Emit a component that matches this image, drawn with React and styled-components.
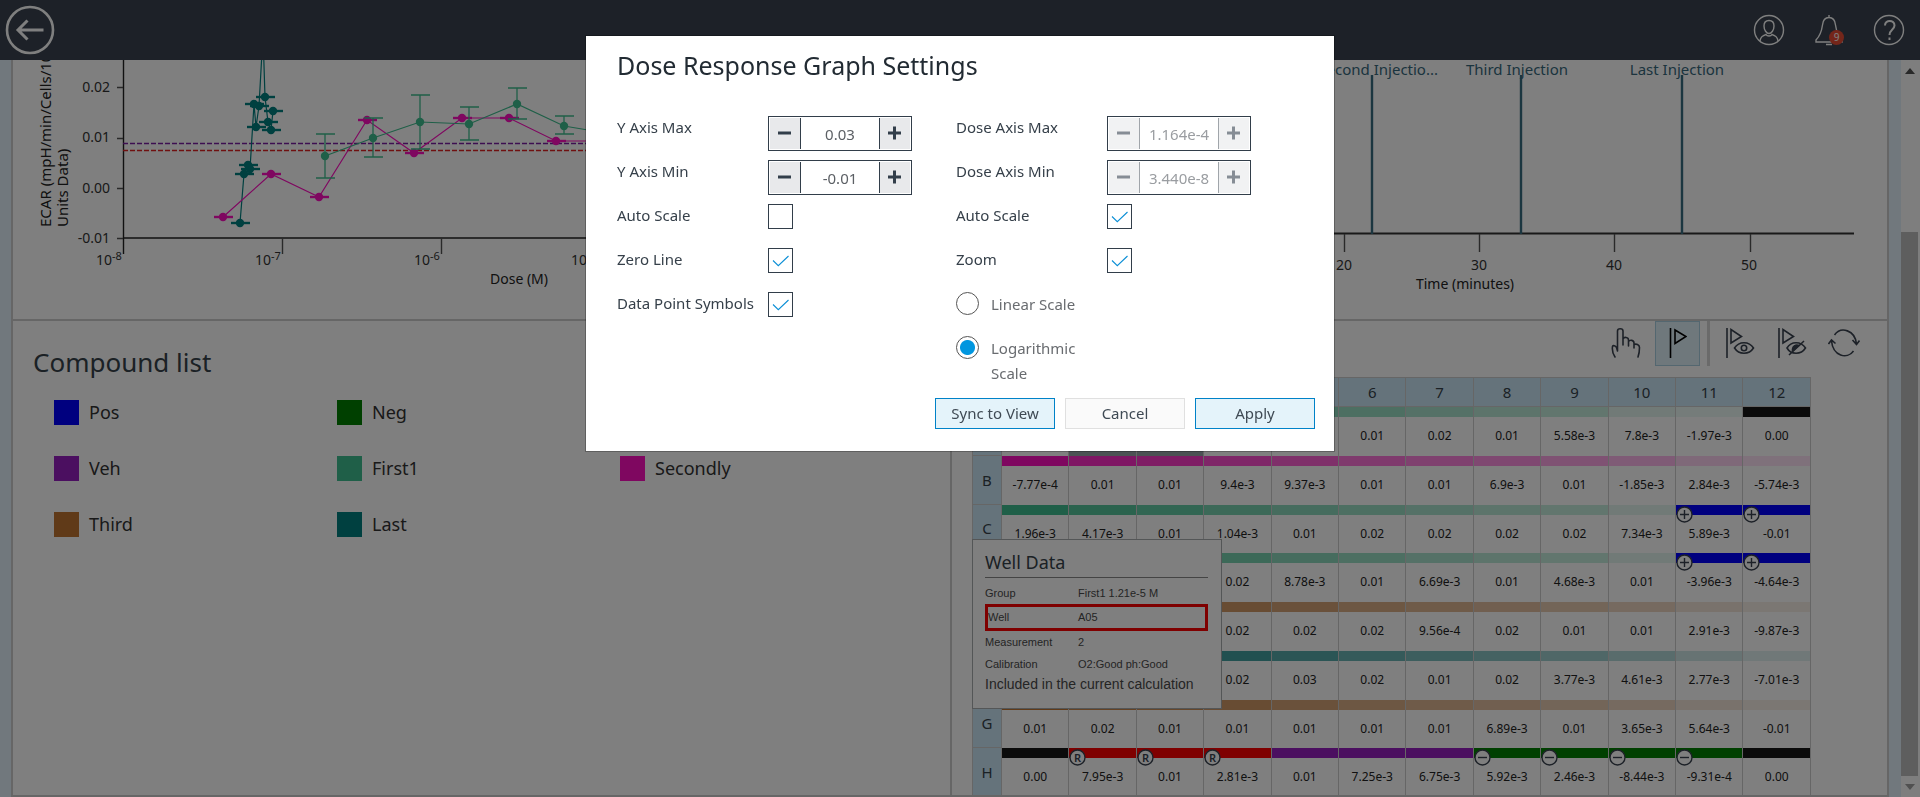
import React from "react";
import styled, { createGlobalStyle } from "styled-components";

const GlobalStyle = createGlobalStyle`
  *, *::before, *::after { box-sizing: border-box; }
  html, body { margin: 0; height: 100%; }
  body { font-family: "Noto Sans", "Open Sans", sans-serif; color: #36424a; background: #e2f0fa; overflow: hidden; }
  button, input { font: inherit; color: inherit; }
`;

const line = "#cdcdcd";

const Shell = styled.div`
  display: flex;
  flex-direction: column;
  height: 100vh;
  min-height: 600px;
`;

const Header = styled.header`
  flex: 0 0 60px;
  display: flex;
  align-items: center;
  justify-content: space-between;
  padding: 0 15px 0 5px;
  background: #3a4350;
  color: #fff;
`;

const HeaderActions = styled.nav`
  display: flex;
  gap: 28px;
`;

const IconButton = styled.button`
  display: block;
  padding: 0;
  border: 0;
  background: none;
  line-height: 0;
`;

const Body = styled.div`
  flex: 1;
  min-height: 0;
  display: flex;
  padding-left: 11px;
`;

const Main = styled.main`
  flex: 1;
  min-width: 0;
  display: flex;
  flex-direction: column;
  margin-right: 12px;
  border: solid ${line};
  border-width: 0 2px 2px;
  background: #fff;
`;

const Charts = styled.section`
  flex: 0 0 261px;
  display: grid;
  grid-template-columns: minmax(0, 1fr) minmax(0, 1fr);
  border-bottom: 2px solid ${line};
  overflow: hidden;
`;

const ChartPanel = styled.div`
  overflow: hidden;
  & + & { border-left: 2px solid ${line}; }
  svg { display: block; font-size: 14px; }
`;

const Lower = styled.section`
  flex: 1;
  min-height: 0;
  display: grid;
  grid-template-columns: minmax(0, 1fr) minmax(0, 1fr);
  grid-template-rows: minmax(0, 1fr);
`;

const Compounds = styled.section`
  padding: 22px 47px 0 20px;
`;

const PanelTitle = styled.h2`
  margin: 0 0 19px;
  font-size: 26px;
  line-height: 38px;
  font-weight: 400;
`;

const Legend = styled.ul`
  display: grid;
  grid-template-columns: repeat(3, 1fr);
  row-gap: 31px;
  margin: 0;
  padding: 0 0 0 21px;
  list-style: none;
`;

const LegendItem = styled.li`
  display: flex;
  gap: 10px;
  font-size: 18px;
  line-height: 25px;
  color: #333;
  &::before {
    content: "";
    width: 25px;
    height: 25px;
    background: ${(p) => p.$color};
  }
`;

const PlatePanel = styled.section`
  position: relative;
  border-left: 2px solid ${line};
  overflow: hidden;
`;

const Toolbar = styled.div`
  display: flex;
  justify-content: flex-end;
  gap: 7px;
  padding-right: 21px;
  margin-bottom: 11px;
`;

const Tool = styled.button`
  display: grid;
  place-items: center;
  width: 45px;
  height: 45px;
  padding: 0 0 2px;
  border: 1px solid ${(p) => (p.$active ? "#a9cfe0" : "transparent")};
  background: ${(p) => (p.$active ? "#dff1f8" : "none")};
  color: ${(p) => (p.$active ? "#000" : "#3a4350")};
`;

const ToolDivider = styled.span`
  width: 3px;
  background: #d5d5d5;
`;

const PlateFrame = styled.div`
  padding: 0 76px 0 20px;
`;

const Plate = styled.table`
  width: 100%;
  height: 420px;
  table-layout: fixed;
  border-collapse: separate;
  border-spacing: 0;
  border: solid ${line};
  border-width: 1px 0 0 1px;
`;

const Head = styled.th`
  width: ${(p) => (p.$corner ? "29px" : "auto")};
  height: 29px;
  padding: 0;
  border: solid ${line};
  border-width: 0 1px 1px 0;
  background: #cbe6f6;
  font-size: 15px;
  font-weight: 400;
  text-align: center;
`;

const Well = styled.td`
  position: relative;
  padding: 0;
  border-right: 1px solid ${line};
  background: ${(p) => (p.$shaded ? "#98a4a8" : "#fff")};
  font-size: 12px;
  color: #222;
  text-align: center;
  vertical-align: top;
`;

const Bar = styled.div`
  height: 10px;
  background: ${(p) => p.$color};
  opacity: ${(p) => p.$strength};
`;

const Value = styled.div`
  line-height: 38px;
`;

const Marker = styled.span`
  position: absolute;
  top: 1px;
  left: 0;
  line-height: 0;
`;

const WellCard = styled.aside`
  position: absolute;
  left: 20px;
  top: 218px;
  width: 250px;
  height: 170px;
  padding: 7px 13px 0 12px;
  border: 1px solid #a8acae;
  background: #fff;
  font-family: "Liberation Sans", Arial, sans-serif;
  font-size: 11px;
  color: #4a4a4a;
`;

const CardTitle = styled.h3`
  margin: 0 0 4px;
  border-bottom: 1px solid #888;
  font: 400 18px/30px "Noto Sans", sans-serif;
  color: #36424a;
`;

const Facts = styled.dl`
  margin: 0;
`;

const Fact = styled.div`
  display: grid;
  grid-template-columns: 93px 1fr;
  line-height: 22px;
  ${(p) => p.$marked && "grid-template-columns: 90px 1fr; line-height: 21px; border: 3px solid #f00;"}
  dd { margin: 0; }
`;

const Note = styled.p`
  margin: 0;
  font-size: 14px;
  line-height: 18px;
`;

const ScrollTrack = styled.div`
  flex: 0 0 19px;
  display: flex;
  flex-direction: column;
  background: #fcfcfc;
`;

const ScrollArrow = styled.span`
  flex: 0 0 21px;
  display: grid;
  place-items: center;
  width: 17px;
  color: ${(p) => (p.$dim ? "#a0a0a0" : "#505050")};
`;

const ScrollThumb = styled.div`
  flex: 544;
  width: 17px;
  background: #bdbdbd;
`;

const ScrollSpace = styled.div`
  flex: 151;
`;

const Scrim = styled.div`
  position: fixed;
  inset: 0;
  display: flex;
  align-items: flex-start;
  justify-content: center;
  padding-top: 36px;
  background: rgba(0, 0, 0, 0.5);
`;

const Dialog = styled.form`
  width: 748px;
  padding: 9px 19px 22px 31px;
  background: #fff;
  box-shadow: 0 0 0 1px rgba(0, 0, 0, 0.25);
`;

const DialogTitle = styled.h1`
  margin: 0 0 31px;
  font-size: 25px;
  line-height: 40px;
  font-weight: 400;
  color: #222b33;
`;

const Columns = styled.div`
  display: flex;
  margin-bottom: 12px;
`;

const Column = styled.div`
  flex: 0 0 339px;
`;

const Field = styled.div`
  display: flex;
  align-items: flex-start;
  min-height: 44px;
  font-size: 15px;
  > label { flex: 0 0 151px; line-height: 22px; color: #36404a; }
`;

const Stepper = styled.div`
  display: flex;
  width: 144px;
  height: 35px;
  padding: 1px;
  border: 1px solid #323e4a;
`;

const StepButton = styled.button`
  flex: 0 0 30px;
  display: grid;
  place-items: center;
  padding: 0 0 2px;
  border: 0;
  background: #e8e9eb;
  color: #323e4a;
  &:disabled { background: #f1f2f3; color: #868d95; }
`;

const StepInput = styled.input`
  flex: 1;
  min-width: 0;
  padding: 0;
  border: solid #323e4a;
  border-width: 0 1px;
  background: #fff;
  text-align: center;
  color: #5c6065;
  &:disabled { color: #9a9da1; border-color: #a0a5aa; }
`;

const CheckBox = styled.span`
  position: relative;
  width: 25px;
  height: 25px;
  input { appearance: none; display: block; width: 25px; height: 25px; margin: 0; border: 1px solid #323e4a; background: #fff; }
  svg { position: absolute; inset: 0; pointer-events: none; }
`;

const RadioRow = styled.div`
  display: flex;
  align-items: flex-start;
  gap: 12px;
  min-height: ${(p) => (p.$tall ? "50px" : "44px")};
  label { width: 100px; font-size: 15px; line-height: 25px; color: #696c70; }
`;

const Radio = styled.input`
  appearance: none;
  flex: 0 0 23px;
  height: 23px;
  margin: 0;
  border: 1px solid #555;
  border-radius: 50%;
  background: #fff;
  &:checked { background: radial-gradient(circle, #0096df 7px, #fff 8px); }
`;

const Actions = styled.div`
  display: flex;
  justify-content: flex-end;
  gap: 10px;
`;

const Action = styled.button`
  width: 120px;
  height: 31px;
  padding: 0 0 2px;
  border: 1px solid ${(p) => (p.$primary ? "#0082c8" : "#e0e0e0")};
  background: ${(p) => (p.$primary ? "#e4f3fa" : "#fafafa")};
  font-size: 15px;
  color: #3f4a54;
`;

const colors = {
  pos: "#0000ff",
  neg: "#008000",
  veh: "#961ec0",
  first: "#3fbf90",
  second: "#ff0fc0",
  third: "#c07430",
  last: "#008080",
  blank: "#161616",
  ref: "#ff0000",
};

const compounds = [
  ["Pos", colors.pos],
  ["Neg", colors.neg],
  null,
  ["Veh", colors.veh],
  ["First1", colors.first],
  ["Secondly", colors.second],
  ["Third", colors.third],
  ["Last", colors.last],
];

const plate = [
  { name: "", group: "first", special: { 11: ["blank"] }, values: ["", "", "", "", "", "0.01", "0.02", "0.01", "5.58e-3", "7.8e-3", "-1.97e-3", "0.00"] },
  { name: "B", group: "second", special: {}, values: ["-7.77e-4", "0.01", "0.01", "9.4e-3", "9.37e-3", "0.01", "0.01", "6.9e-3", "0.01", "-1.85e-3", "2.84e-3", "-5.74e-3"] },
  { name: "C", group: "first", special: { 10: ["pos", "+"], 11: ["pos", "+"] }, values: ["1.96e-3", "4.17e-3", "0.01", "1.04e-3", "0.01", "0.02", "0.02", "0.02", "0.02", "7.34e-3", "5.89e-3", "-0.01"] },
  { name: "", group: "first", special: { 10: ["pos", "+"], 11: ["pos", "+"] }, values: ["", "", "", "0.02", "8.78e-3", "0.01", "6.69e-3", "0.01", "4.68e-3", "0.01", "-3.96e-3", "-4.64e-3"] },
  { name: "", group: "third", special: {}, values: ["", "", "", "0.02", "0.02", "0.02", "9.56e-4", "0.02", "0.01", "0.01", "2.91e-3", "-9.87e-3"] },
  { name: "", group: "last", special: {}, values: ["", "", "", "0.02", "0.03", "0.02", "0.01", "0.02", "3.77e-3", "4.61e-3", "2.77e-3", "-7.01e-3"] },
  { name: "G", group: "third", special: {}, values: ["0.01", "0.02", "0.01", "0.01", "0.01", "0.01", "0.01", "6.89e-3", "0.01", "3.65e-3", "5.64e-3", "-0.01"] },
  {
    name: "H",
    group: "veh",
    special: {
      0: ["blank"], 1: ["ref", "R"], 2: ["ref", "R"], 3: ["ref", "R"], 4: ["veh"], 5: ["veh"], 6: ["veh"],
      7: ["neg", "-"], 8: ["neg", "-"], 9: ["neg", "-"], 10: ["neg", "-"], 11: ["blank"],
    },
    values: ["0.00", "7.95e-3", "0.01", "2.81e-3", "0.01", "7.25e-3", "6.75e-3", "5.92e-3", "2.46e-3", "-8.44e-3", "-9.31e-4", "0.00"],
  },
];

const fade = [1, 0.88, 0.82, 0.74, 0.66, 0.58, 0.52, 0.46, 0.38, 0.3, 0.19, 0.12];
const fadeShort = [1, 0.88, 0.8, 0.7, 0.6, 0.52, 0.44, 0.36, 0.3, 0.15, 0.1, 0.1];

function WellMarker({ kind }) {
  return (
    <Marker>
      <svg width="17" height="17" viewBox="0 0 17 17" fill="none" stroke="#3a4350">
        <circle cx="8.5" cy="8.5" r="7.5" fill="#fff" strokeWidth="1.4" />
        {kind === "R" ? (
          <text x="8.5" y="12.5" textAnchor="middle" fontSize="11" fontWeight="600" fill="#3a4350" stroke="none">R</text>
        ) : (
          <path d={kind === "+" ? "M4 8.5h9M8.5 4v9" : "M4 8.5h9"} strokeWidth="1.4" />
        )}
      </svg>
    </Marker>
  );
}

const lastPoints = [[240, 223], [244, 174], [248, 165], [250, 169], [254, 104], [256, 127], [259, 106], [263, 34], [265, 97], [268, 122], [271, 130], [273, 111]];
const secondPoints = [[223, 217], [271, 174], [319, 197], [367, 120], [414, 153], [462, 118], [509, 118], [556, 141], [604, 141]];
const firstPoints = [[325, 156, 134, 178], [373, 138, 118, 157], [420, 122, 95, 149], [469, 124, 107, 140], [517, 104, 88, 119], [564, 126, 116, 134], [612, 134, 124, 144]];

function Series({ points, color }) {
  return (
    <g stroke={color} fill={color}>
      <polyline points={points.map((p) => p[0] + "," + p[1]).join(" ")} fill="none" strokeWidth="1.2" />
      {points.map(([x, y, top, bottom]) => (
        <g key={x}>
          {top ? (
            <path d={`M${x - 9} ${top}h19M${x - 9} ${bottom}h19M${x} ${top}V${bottom}`} strokeWidth="1.3" />
          ) : (
            <path d={`M${x - 9} ${y}h19`} strokeWidth="2.4" />
          )}
          <circle cx={x} cy={y} r="4.2" stroke="none" />
        </g>
      ))}
    </g>
  );
}

function DoseChart() {
  return (
    <svg width="936" height="259" viewBox="13 60 936 259" role="img" aria-label="Dose response">
      <g fill="none" stroke="#222" strokeWidth="1.4">
        <path d="M123.5 60V254M123 238H900" />
        <path d="M117 87.5h6M117 138.5h6M117 188.5h6M117 238.5h6M282.5 238v16M441.5 238v16M600.5 238v16" stroke="#555" />
      </g>
      <g fill="#333" textAnchor="end">
        <text x="110" y="92">0.02</text>
        <text x="110" y="142">0.01</text>
        <text x="110" y="193">0.00</text>
        <text x="110" y="243">-0.01</text>
        {[["-8", 96], ["-7", 255], ["-6", 414], ["-5", 571]].map(([e, x]) => (
          <text key={e} x={x} y="265" textAnchor="start">10<tspan fontSize="11" dy="-5">{e}</tspan></text>
        ))}
      </g>
      <g fill="#222">
        <text x="519" y="284" textAnchor="middle">Dose (M)</text>
        <text transform="translate(51 227) rotate(-90)" fontSize="15">ECAR (mpH/min/Cells/10</text>
        <text transform="translate(68 227) rotate(-90)" fontSize="15">Units Data)</text>
      </g>
      <path d="M123 143.5H900" stroke="#7b1fa2" strokeWidth="1.4" strokeDasharray="5 2" />
      <path d="M123 150.5H900" stroke="#e02020" strokeWidth="1.6" strokeDasharray="5 2" />
      <Series points={lastPoints} color={colors.last} />
      <Series points={secondPoints} color={colors.second} />
      <Series points={firstPoints} color={colors.first} />
    </svg>
  );
}

function TimeChart() {
  return (
    <svg width="935" height="259" viewBox="951 60 935 259" role="img" aria-label="Rate over time">
      <path d="M1000 233.5H1853" stroke="#333" strokeWidth="1.8" />
      <path d="M1343.5 234v18M1478.5 234v18M1613.5 234v18M1749.5 234v18" stroke="#555" strokeWidth="1.4" />
      <path d="M1371 75V234M1520 75V234M1681 75V234" stroke="#366c80" strokeWidth="2.4" />
      <g fill="#36687c" fontSize="15">
        <text x="1437" y="75" textAnchor="end">Second Injectio...</text>
        <text x="1516" y="75" textAnchor="middle">Third Injection</text>
        <text x="1676" y="75" textAnchor="middle">Last Injection</text>
      </g>
      <g fill="#333" textAnchor="middle">
        <text x="1343" y="270">20</text>
        <text x="1478" y="270">30</text>
        <text x="1613" y="270">40</text>
        <text x="1748" y="270">50</text>
        <text x="1464" y="289" fill="#222">Time (minutes)</text>
      </g>
    </svg>
  );
}

function NumberField({ id, label, value, disabled }) {
  return (
    <Field>
      <label htmlFor={id}>{label}</label>
      <Stepper>
        <StepButton type="button" disabled={disabled} aria-label={"Decrease " + label}>
          <svg width="14" height="14" stroke="currentColor" strokeWidth="3"><path d="M0 7h13" /></svg>
        </StepButton>
        <StepInput id={id} defaultValue={value} disabled={disabled} />
        <StepButton type="button" disabled={disabled} aria-label={"Increase " + label}>
          <svg width="14" height="14" stroke="currentColor" strokeWidth="3"><path d="M0 7h13M6.5 0.5v13" /></svg>
        </StepButton>
      </Stepper>
    </Field>
  );
}

function CheckField({ id, label, initial }) {
  const [on, setOn] = React.useState(initial);
  return (
    <Field>
      <label htmlFor={id}>{label}</label>
      <CheckBox>
        <input id={id} type="checkbox" checked={on} onChange={() => setOn(!on)} />
        {on && (
          <svg width="25" height="25" fill="none" stroke="#0c8fd6" strokeWidth="1.1"><path d="M5 12.5l5.3 5.2L20.5 8" /></svg>
        )}
      </CheckBox>
    </Field>
  );
}

function SettingsDialog() {
  return (
    <Dialog role="dialog" aria-labelledby="settings-title" onSubmit={(e) => e.preventDefault()}>
      <DialogTitle id="settings-title">Dose Response Graph Settings</DialogTitle>
      <Columns>
        <Column>
          <NumberField id="y-max" label="Y Axis Max" value="0.03" />
          <NumberField id="y-min" label="Y Axis Min" value="-0.01" />
          <CheckField id="y-auto" label="Auto Scale" initial={false} />
          <CheckField id="zero-line" label="Zero Line" initial />
          <CheckField id="symbols" label="Data Point Symbols" initial />
        </Column>
        <Column>
          <NumberField id="dose-max" label="Dose Axis Max" value="1.164e-4" disabled />
          <NumberField id="dose-min" label="Dose Axis Min" value="3.440e-8" disabled />
          <CheckField id="dose-auto" label="Auto Scale" initial />
          <CheckField id="zoom" label="Zoom" initial />
          <RadioRow>
            <Radio type="radio" name="scale" id="linear" />
            <label htmlFor="linear">Linear Scale</label>
          </RadioRow>
          <RadioRow $tall>
            <Radio type="radio" name="scale" id="log" defaultChecked />
            <label htmlFor="log">Logarithmic Scale</label>
          </RadioRow>
        </Column>
      </Columns>
      <Actions>
        <Action type="button" $primary>Sync to View</Action>
        <Action type="button">Cancel</Action>
        <Action type="submit" $primary>Apply</Action>
      </Actions>
    </Dialog>
  );
}

function PlateTools() {
  const pen = { fill: "none", stroke: "currentColor", strokeWidth: 1.6 };
  return (
    <Toolbar>
      <Tool aria-label="Select">
        <svg width="30" height="32" viewBox="0 0 30 32" {...pen} strokeLinecap="round" strokeLinejoin="round">
          <path d="M4 30C2 27 1 23 1.500 19.500C2 18 4.500 18.500 5.500 20.500L6.500 24V4C6.500 1 12 1 12 4V18M12 12C13 9.500 17.500 10 17.500 13V19M17.500 14.500C19 12.500 23 13 23 16V21M23 17.500C25 16.500 28.500 17.500 28.500 20.500C28.500 24 28 27 27 30" />
        </svg>
      </Tool>
      <Tool $active aria-label="Flag">
        <svg width="18" height="32" viewBox="0 0 18 32" {...pen}><path d="M1.500 1V31M6 3V16.500L17 9.500Z" /></svg>
      </Tool>
      <ToolDivider />
      <Tool aria-label="Show flagged">
        <svg width="30" height="32" viewBox="0 0 30 32" {...pen}>
          <path d="M2 1V31M6 2.500V16L16.500 9.500ZM9.500 21C14 14 24 14 28.500 21C24 28 14 28 9.500 21Z" />
          <circle cx="19" cy="21" r="2.700" />
        </svg>
      </Tool>
      <Tool aria-label="Hide flagged">
        <svg width="30" height="32" viewBox="0 0 30 32" {...pen}>
          <path d="M2 1V31M6 2.500V16L16.500 9.500ZM10 21C14 14 24 14 28.500 21C24 28 14 28 10 21ZM12 28L27 14" />
          <path d="M15.500 24C15 19 19 17 22 18.500Z" fill="currentColor" />
        </svg>
      </Tool>
      <Tool aria-label="Refresh">
        <svg width="32" height="32" viewBox="0 0 32 32" {...pen}>
          <path d="M6.500 8C13 -1 27 3 28.500 17M25.500 24C19 33 5 29 3.500 14M24.500 13L28.500 17.500L31.500 13.500M0.500 17L3.500 13L7.500 16.500" />
        </svg>
      </Tool>
    </Toolbar>
  );
}

export default function App() {
  return (
    <>
      <GlobalStyle />
      <Shell>
        <Header>
          <IconButton aria-label="Back">
            <svg width="50" height="50" viewBox="0 0 50 50" fill="none" stroke="currentColor" strokeWidth="2.600">
              <circle cx="25" cy="25" r="23" />
              <path d="M38.500 25H13M22.500 15.500L13 25L22.500 34.500" strokeWidth="3" />
            </svg>
          </IconButton>
          <HeaderActions>
            <IconButton aria-label="Account">
              <svg width="32" height="32" viewBox="0 0 32 32" fill="none" stroke="currentColor" strokeWidth="1.400">
                <circle cx="16" cy="16" r="14.500" />
                <path d="M16 6.500C12.500 6.500 11 9 11 12C11 16 13.500 19.500 16 19.500S21 16 21 12C21 9 19.500 6.500 16 6.500ZM7 27C7.500 22.500 10 21.500 13 20.500C14 22.500 18 22.500 19 20.500C22 21.500 24.500 22.500 25 27" />
              </svg>
            </IconButton>
            <IconButton aria-label="Notifications">
              <svg width="32" height="32" viewBox="0 0 32 32" fill="none" stroke="currentColor" strokeWidth="1.400">
                <path d="M16 1V3.500M3 28V26C7 22 8.500 18 9.500 11C10 6 12.500 3.500 16 3.500S22 6 22.500 11C23.500 18 25 22 29 26V28ZM13 30.500H19" />
                <circle cx="23.500" cy="23.500" r="7.500" fill="#e84c35" stroke="none" />
                <text x="23.500" y="27" textAnchor="middle" fontSize="10" fill="#fff" stroke="none">9</text>
              </svg>
            </IconButton>
            <IconButton aria-label="Help">
              <svg width="32" height="32" viewBox="0 0 32 32" fill="none" stroke="currentColor" strokeWidth="1.400">
                <circle cx="16" cy="16" r="14.500" />
                <path d="M12 11.500C12 5.500 21.500 5.500 21.500 11.500C21.500 15.500 16.500 15.500 16.500 21M16.500 23.500V26" strokeWidth="2" />
              </svg>
            </IconButton>
          </HeaderActions>
        </Header>
        <Body>
          <Main>
            <Charts>
              <ChartPanel><DoseChart /></ChartPanel>
              <ChartPanel><TimeChart /></ChartPanel>
            </Charts>
            <Lower>
              <Compounds>
                <PanelTitle>Compound list</PanelTitle>
                <Legend>
                  {compounds.map((c, i) => (c ? <LegendItem key={c[0]} $color={c[1]}>{c[0]}</LegendItem> : <li key={i} />))}
                </Legend>
              </Compounds>
              <PlatePanel>
                <PlateTools />
                <PlateFrame>
                  <Plate>
                    <thead>
                      <tr>
                        <Head $corner />
                        {plate[0].values.map((_, i) => <Head key={i} scope="col">{i > 4 ? i + 1 : ""}</Head>)}
                      </tr>
                    </thead>
                    <tbody>
                      {plate.map((row, r) => (
                        <tr key={r}>
                          <Head scope="row">{row.name}</Head>
                          {row.values.map((v, i) => {
                            const special = row.special[i];
                            const steps = row.group === "first" ? fadeShort : fade;
                            return (
                              <Well key={i} $shaded={r === 0 && (i === 1 || i === 2)}>
                                <Bar $color={colors[special ? special[0] : row.group]} $strength={special ? 1 : steps[i]} />
                                <Value>{v}</Value>
                                {special && special[1] && <WellMarker kind={special[1]} />}
                              </Well>
                            );
                          })}
                        </tr>
                      ))}
                    </tbody>
                  </Plate>
                </PlateFrame>
                <WellCard>
                  <CardTitle>Well Data</CardTitle>
                  <Facts>
                    <Fact><dt>Group</dt><dd>First1 1.21e-5 M</dd></Fact>
                    <Fact $marked><dt>Well</dt><dd>A05</dd></Fact>
                    <Fact><dt>Measurement</dt><dd>2</dd></Fact>
                    <Fact><dt>Calibration</dt><dd>O2:Good ph:Good</dd></Fact>
                  </Facts>
                  <Note>Included in the current calculation</Note>
                </WellCard>
              </PlatePanel>
            </Lower>
          </Main>
          <ScrollTrack>
            <ScrollArrow><svg width="10" height="6"><path d="M0 6L5 0L10 6Z" fill="currentColor" /></svg></ScrollArrow>
            <ScrollSpace />
            <ScrollThumb />
            <ScrollArrow $dim><svg width="10" height="6"><path d="M0 0L5 6L10 0Z" fill="currentColor" /></svg></ScrollArrow>
          </ScrollTrack>
        </Body>
      </Shell>
      <Scrim>
        <SettingsDialog />
      </Scrim>
    </>
  );
}
